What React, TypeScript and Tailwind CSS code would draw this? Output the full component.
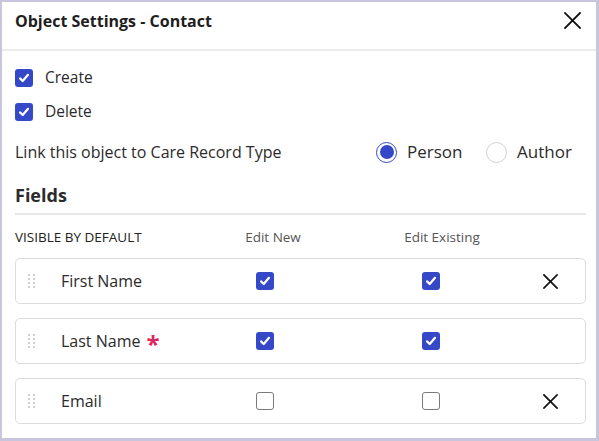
import React from 'react';

const font = { fontFamily: '"Open Sans", "Noto Sans", sans-serif' };

function CloseIcon({ size = 16, stroke = 1.8 }: { size?: number; stroke?: number }) {
    return (
        <svg width={size} height={size} viewBox="0 0 16 16" fill="none">
            <path d="M1 1 L15 15 M15 1 L1 15" stroke="#111" strokeWidth={stroke} strokeLinecap="square" />
        </svg>
    );
}

function Check({ checked }: { checked: boolean }) {
    if (!checked) {
        return <span className="block w-[18px] h-[18px] rounded-[3px] border-[1.5px] border-[#7a7a7a] bg-white shrink-0"></span>;
    }
    return (
        <span className="flex items-center justify-center w-[18px] h-[18px] rounded-[3px] bg-[#3548c8] shrink-0">
            <svg width="12" height="12" viewBox="0 0 12 12" fill="none">
                <path d="M2 6.4 L4.7 9 L10 2.8" stroke="#fff" strokeWidth="2.2" strokeLinecap="round" strokeLinejoin="round" />
            </svg>
        </span>
    );
}

function Radio({ checked }: { checked: boolean }) {
    if (checked) {
        return (
            <span className="flex items-center justify-center w-[21px] h-[21px] rounded-full border-[1.5px] border-[#3548c8] shrink-0">
                <span className="block w-[14px] h-[14px] rounded-full bg-[#3548c8]"></span>
            </span>
        );
    }
    return <span className="block w-[21px] h-[21px] rounded-full border-[1.5px] border-[#cfcfd6] shrink-0"></span>;
}

function DragHandle() {
    return (
        <span className="grid grid-cols-2 gap-x-[3px] gap-y-[2px] w-[7px]">
            {Array.from({ length: 8 }).map((_, i) => (
                <span key={i} className="block w-[2px] h-[2px] bg-[#d0d0d0]"></span>
            ))}
        </span>
    );
}

const fields = [
    { name: 'First Name', required: false, editNew: true, editExisting: true, removable: true },
    { name: 'Last Name', required: true, editNew: true, editExisting: true, removable: false },
    { name: 'Email', required: false, editNew: false, editExisting: false, removable: true },
];

export default function App() {
    return (
        <div className="w-[599px] h-[441px] bg-[#c8c6dc] pt-[2px] pl-[2px] pr-[3px] pb-[3px]" style={font}>
            <div className="w-full h-full bg-white text-[#2b2b2b]">
                {/* Header */}
                <div className="h-[49px] border-b-2 border-[#ebebeb] flex items-start justify-between pl-[13px] pr-[15px] pt-[8px]">
                    <h2 className="text-[16px] font-bold text-[#1e1e1e] leading-[22px]">Object Settings - Contact</h2>
                    <span className="mt-[2px]"><CloseIcon size={17} /></span>
                </div>

                <div className="pl-[13px] pr-[10px] pt-[15px]">
                    <label className="flex items-center h-[24px] gap-[12px] text-[15.5px]">
                        <Check checked />
                        <span>Create</span>
                    </label>
                    <label className="flex items-center h-[24px] gap-[12px] text-[15.5px] mt-[10px]">
                        <Check checked />
                        <span>Delete</span>
                    </label>

                    <div className="flex items-center h-[24px] mt-[16px] text-[16px]">
                        <span className="w-[361px]">Link this object to Care Record Type</span>
                        <Radio checked />
                        <span className="ml-[10px] w-[79px] text-[17px]">Person</span>
                        <Radio checked={false} />
                        <span className="ml-[10px] text-[17px]">Author</span>
                    </div>

                    <h3 className="h-[24px] mt-[19px] text-[18px] font-bold leading-[24px] text-[#2b2b2b]">Fields</h3>
                    <div className="mt-[6px] border-t-2 border-[#e6e6e6]"></div>

                    <div className="flex items-center h-[20px] mt-[12px] text-[13.5px]">
                        <span className="w-[208px] text-[#222]">VISIBLE BY DEFAULT</span>
                        <span className="w-[100px] text-center text-[#555]">Edit New</span>
                        <span className="ml-[59px] w-[120px] text-center text-[#555]">Edit Existing</span>
                    </div>

                    <div className="mt-[11px] flex flex-col gap-[14px]">
                        {fields.map((f) => (
                            <div key={f.name} className="flex items-center h-[46px] border border-[#dcdcdc] rounded-[5px] pl-[12px] text-[16px]">
                                <DragHandle />
                                <span className="ml-[26px] w-[195px] flex items-center gap-[6px]">
                                    {f.name}
                                    {f.required && <span className="text-[#e0245e] text-[24px] leading-none font-bold mt-[6px]">*</span>}
                                </span>
                                <Check checked={f.editNew} />
                                <span className="w-[148px]"></span>
                                <Check checked={f.editExisting} />
                                <span className="w-[103px]"></span>
                                {f.removable && <CloseIcon size={15} stroke={1.8} />}
                            </div>
                        ))}
                    </div>
                </div>
            </div>
        </div>
    );
}
